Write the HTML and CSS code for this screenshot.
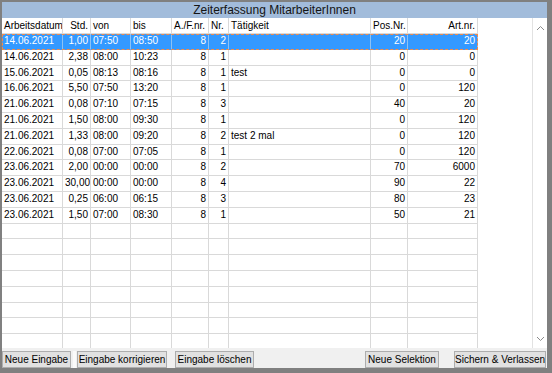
FILE: index.html
```html
<!DOCTYPE html>
<html lang="de">
<head>
<meta charset="utf-8">
<title>Zeiterfassung MitarbeiterInnen</title>
<link rel="stylesheet" href="styles.css">
</head>
<body>
<div class="window">
  <div class="title">Zeiterfassung MitarbeiterInnen</div>
  <div class="main">
    <div class="grid">
      <div class="row head">
        <div class="c">Arbeitsdatum</div>
        <div class="c r">Std.</div>
        <div class="c">von</div>
        <div class="c">bis</div>
        <div class="c">A./F.nr.</div>
        <div class="c">Nr.</div>
        <div class="c">Tätigkeit</div>
        <div class="c r">Pos.Nr.</div>
        <div class="c r">Art.nr.</div>
      </div>
      <div class="row sel">
        <div class="c">14.06.2021</div><div class="c r">1,00</div><div class="c">07:50</div><div class="c">08:50</div><div class="c r">8</div><div class="c r">2</div><div class="c"></div><div class="c r">20</div><div class="c r">20</div>
      </div>
      <div class="row">
        <div class="c">14.06.2021</div><div class="c r">2,38</div><div class="c">08:00</div><div class="c">10:23</div><div class="c r">8</div><div class="c r">1</div><div class="c"></div><div class="c r">0</div><div class="c r">0</div>
      </div>
      <div class="row">
        <div class="c">15.06.2021</div><div class="c r">0,05</div><div class="c">08:13</div><div class="c">08:16</div><div class="c r">8</div><div class="c r">1</div><div class="c">test</div><div class="c r">0</div><div class="c r">0</div>
      </div>
      <div class="row">
        <div class="c">16.06.2021</div><div class="c r">5,50</div><div class="c">07:50</div><div class="c">13:20</div><div class="c r">8</div><div class="c r">1</div><div class="c"></div><div class="c r">0</div><div class="c r">120</div>
      </div>
      <div class="row">
        <div class="c">21.06.2021</div><div class="c r">0,08</div><div class="c">07:10</div><div class="c">07:15</div><div class="c r">8</div><div class="c r">3</div><div class="c"></div><div class="c r">40</div><div class="c r">20</div>
      </div>
      <div class="row">
        <div class="c">21.06.2021</div><div class="c r">1,50</div><div class="c">08:00</div><div class="c">09:30</div><div class="c r">8</div><div class="c r">1</div><div class="c"></div><div class="c r">0</div><div class="c r">120</div>
      </div>
      <div class="row">
        <div class="c">21.06.2021</div><div class="c r">1,33</div><div class="c">08:00</div><div class="c">09:20</div><div class="c r">8</div><div class="c r">2</div><div class="c">test 2 mal</div><div class="c r">0</div><div class="c r">120</div>
      </div>
      <div class="row">
        <div class="c">22.06.2021</div><div class="c r">0,08</div><div class="c">07:00</div><div class="c">07:05</div><div class="c r">8</div><div class="c r">1</div><div class="c"></div><div class="c r">0</div><div class="c r">120</div>
      </div>
      <div class="row">
        <div class="c">23.06.2021</div><div class="c r">2,00</div><div class="c">00:00</div><div class="c">00:00</div><div class="c r">8</div><div class="c r">2</div><div class="c"></div><div class="c r">70</div><div class="c r">6000</div>
      </div>
      <div class="row">
        <div class="c">23.06.2021</div><div class="c r">30,00</div><div class="c">00:00</div><div class="c">00:00</div><div class="c r">8</div><div class="c r">4</div><div class="c"></div><div class="c r">90</div><div class="c r">22</div>
      </div>
      <div class="row">
        <div class="c">23.06.2021</div><div class="c r">0,25</div><div class="c">06:00</div><div class="c">06:15</div><div class="c r">8</div><div class="c r">3</div><div class="c"></div><div class="c r">80</div><div class="c r">23</div>
      </div>
      <div class="row">
        <div class="c">23.06.2021</div><div class="c r">1,50</div><div class="c">07:00</div><div class="c">08:30</div><div class="c r">8</div><div class="c r">1</div><div class="c"></div><div class="c r">50</div><div class="c r">21</div>
      </div>
      <div class="row"><div class="c"></div><div class="c"></div><div class="c"></div><div class="c"></div><div class="c"></div><div class="c"></div><div class="c"></div><div class="c"></div><div class="c"></div></div>
      <div class="row"><div class="c"></div><div class="c"></div><div class="c"></div><div class="c"></div><div class="c"></div><div class="c"></div><div class="c"></div><div class="c"></div><div class="c"></div></div>
      <div class="row"><div class="c"></div><div class="c"></div><div class="c"></div><div class="c"></div><div class="c"></div><div class="c"></div><div class="c"></div><div class="c"></div><div class="c"></div></div>
      <div class="row"><div class="c"></div><div class="c"></div><div class="c"></div><div class="c"></div><div class="c"></div><div class="c"></div><div class="c"></div><div class="c"></div><div class="c"></div></div>
      <div class="row"><div class="c"></div><div class="c"></div><div class="c"></div><div class="c"></div><div class="c"></div><div class="c"></div><div class="c"></div><div class="c"></div><div class="c"></div></div>
      <div class="row"><div class="c"></div><div class="c"></div><div class="c"></div><div class="c"></div><div class="c"></div><div class="c"></div><div class="c"></div><div class="c"></div><div class="c"></div></div>
      <div class="row"><div class="c"></div><div class="c"></div><div class="c"></div><div class="c"></div><div class="c"></div><div class="c"></div><div class="c"></div><div class="c"></div><div class="c"></div></div>
      <div class="row"><div class="c"></div><div class="c"></div><div class="c"></div><div class="c"></div><div class="c"></div><div class="c"></div><div class="c"></div><div class="c"></div><div class="c"></div></div>
    </div>
    <div class="filler"></div>
    <div class="scroll">
      <svg class="arrow" width="9" height="6" viewBox="0 0 9 6"><path d="M1 5 L4.5 1.5 L8 5" fill="none" stroke="#8a8a8a" stroke-width="1"/></svg>
      <svg class="arrow" width="9" height="6" viewBox="0 0 9 6"><path d="M1 1 L4.5 4.5 L8 1" fill="none" stroke="#8a8a8a" stroke-width="1"/></svg>
    </div>
  </div>
  <div class="buttons">
    <button class="btn">Neue Eingabe</button>
    <span class="stub"></span>
    <button class="btn">Eingabe korrigieren</button>
    <span></span>
    <button class="btn">Eingabe löschen</button>
    <span></span>
    <button class="btn">Neue Selektion</button>
    <span></span>
    <button class="btn">Sichern &amp; Verlassen</button>
  </div>
</div>
</body>
</html>
```

FILE: styles.css
```css
html, body {
  margin: 0;
  padding: 0;
  background: #ffffff;
}

body {
  font-family: "Liberation Sans", Arial, sans-serif;
  font-size: 10px;
  color: #000;
}

.window {
  width: 552px;
  height: 373px;
  box-sizing: border-box;
  border-style: solid;
  border-color: #808080;
  border-width: 2px 5px 5px 2px;
  background: #f0f0f0;
  display: flex;
  flex-direction: column;
}

.title {
  height: 16px;
  background: #a2bcdb;
  text-align: center;
  font-size: 12px;
  line-height: 16px;
  color: #141414;
}

.main {
  height: 330px;
  display: flex;
  background: #ffffff;
}

.grid {
  width: 476px;
  overflow: hidden;
}

.row {
  display: grid;
  grid-template-columns: 61px 28px 40px 41px 37px 20px 142px 37px 70px;
  height: 15.8px;
}

.row.head {
  height: 16px;
}

.c {
  box-sizing: border-box;
  border-right: 1px solid #d9d9d9;
  border-bottom: 1px solid #d9d9d9;
  padding: 0 2px;
  line-height: 14.8px;
  white-space: nowrap;
  overflow: hidden;
}

.head .c {
  line-height: 15px;
}

.c.r {
  text-align: right;
}

.row.sel {
  background: #3399ff;
  color: #ffffff;
  outline: 1px dashed #f08a4b;
  outline-offset: -1px;
}

.row.sel .c {
  border-right-color: #8cc2f5;
  border-bottom-color: #3399ff;
}

.filler {
  flex: 1;
}

.scroll {
  width: 15px;
  box-sizing: border-box;
  border-left: 1px solid #e2e2e2;
  display: flex;
  flex-direction: column;
  justify-content: space-between;
  align-items: center;
  padding: 7px 0 6px;
  background: #ffffff;
}

.arrow {
  display: block;
}

.buttons {
  height: 20px;
  box-sizing: border-box;
  padding-top: 3px;
  display: grid;
  grid-template-columns: 69px 6px 90px 8px 79px 111px 74px 15px 92px;
}

.btn {
  margin: 0;
  padding: 0;
  height: 17px;
  box-sizing: border-box;
  border: 1px solid #adadad;
  background: #e1e1e1;
  font-family: "Liberation Sans", Arial, sans-serif;
  font-size: 10px;
  color: #000;
  line-height: 15px;
  white-space: nowrap;
}

.stub {
  margin: 0 1px 0 2px;
  background: #fafafa;
  height: 17px;
}
```
